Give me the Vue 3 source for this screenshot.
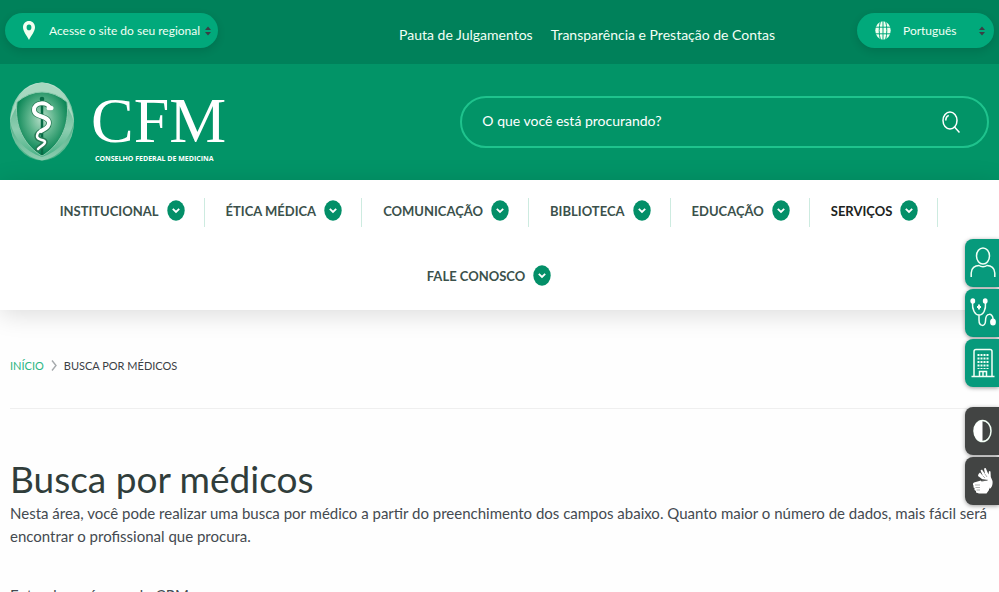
<script setup>
import { ref } from 'vue'

const regional = ref('Acesse o site do seu regional')
const language = ref('Português')
const query = ref('')

const topLinks = ['Pauta de Julgamentos', 'Transparência e Prestação de Contas']
const menu = [
  { label: 'INSTITUCIONAL' },
  { label: 'ÉTICA MÉDICA' },
  { label: 'COMUNICAÇÃO' },
  { label: 'BIBLIOTECA' },
  { label: 'EDUCAÇÃO' },
  { label: 'SERVIÇOS', active: true },
  { label: 'FALE CONOSCO' },
]
</script>

<template>
  <div class="page">
    <header>
      <div class="topbar">
        <div class="pill pill-regional">
          <svg class="pin" viewBox="0 0 12 19" aria-hidden="true">
            <path fill-rule="evenodd" d="M6 0C2.600 0 0 2.700 0 6.200C0 10.500 3.600 14 6 19C8.400 14 12 10.500 12 6.200C12 2.700 9.400 0 6 0ZM6 3.600A2.400 2.800 0 1 1 6 9.200A2.400 2.800 0 1 1 6 3.600Z" />
          </svg>
          <select v-model="regional" aria-label="Site regional">
            <option>Acesse o site do seu regional</option>
          </select>
          <svg class="arrows" viewBox="0 0 6 10" aria-hidden="true"><path d="M0 4L3 0.500L6 4ZM0 6L3 9.500L6 6Z" /></svg>
        </div>

        <nav class="top-links" aria-label="Links rápidos">
          <a v-for="link in topLinks" :key="link" href="#">{{ link }}</a>
        </nav>

        <div class="pill pill-language">
          <svg class="globe" viewBox="0 0 16 19" aria-hidden="true">
            <ellipse cx="8" cy="9.500" rx="7.700" ry="9.200" />
            <path d="M0 6.200H16M0 12.800H16M8 0V19M5.400 0.500C3.800 5 3.800 14 5.400 18.500M10.600 0.500C12.200 5 12.200 14 10.600 18.500" />
          </svg>
          <select v-model="language" aria-label="Idioma">
            <option>Português</option>
          </select>
          <svg class="arrows" viewBox="0 0 6 10" aria-hidden="true"><path d="M0 4L3 0.500L6 4ZM0 6L3 9.500L6 6Z" /></svg>
        </div>
      </div>

      <div class="brandbar">
        <a class="logo" href="#">
          <svg class="emblem" viewBox="1 0 66 80" aria-hidden="true">
            <defs>
              <linearGradient id="ring" x1="0" y1="0" x2="0" y2="1">
                <stop offset="0" stop-color="#c4e4d4" />
                <stop offset="0.350" stop-color="#6dbf9b" />
                <stop offset="0.600" stop-color="#8dcdb0" />
                <stop offset="1" stop-color="#3fae80" />
              </linearGradient>
              <radialGradient id="shield" cx="0.500" cy="0.420" r="0.560">
                <stop offset="0" stop-color="#b9dfca" />
                <stop offset="0.450" stop-color="#5eb58d" />
                <stop offset="1" stop-color="#00804f" />
              </radialGradient>
              <linearGradient id="crest" x1="0" y1="0" x2="0" y2="1">
                <stop offset="0" stop-color="#4fae86" />
                <stop offset="1" stop-color="#8fcdb1" />
              </linearGradient>
            </defs>
            <ellipse cx="33" cy="39.500" rx="32" ry="39" fill="url(#ring)" />
            <path d="M1 40C3 18 16 3 33 0.500C50 3 63 18 65 40C60 22 48 11 33 10C18 11 6 22 1 40Z" fill="#a7d8c0" />
            <path d="M1 40C2 58 15 76 33 78.500C51 76 64 58 65 40C61 56 51 69 33 75C15 69 5 56 1 40Z" fill="url(#crest)" />
            <path d="M8 20Q20 10 33 10Q46 10 58 20C61 45 50 64 33 74C16 64 5 45 8 20Z" fill="url(#shield)" stroke="#8bcbae" stroke-width="1" />
            <path d="M33 16V73" stroke="#066b45" stroke-width="2.500" />
            <circle cx="33" cy="17" r="2.300" fill="#066b45" />
            <g fill="none" stroke-linecap="round" stroke-linejoin="round">
              <path d="M41 26C38 19 25 20 25 28C25 36 40 33 40 41C40 49 28 48 28 54C28 59 36 57 36 60C36 63 31 64 29 67" stroke="#267a55" stroke-width="5.500" />
              <path d="M41 26C38 19 25 20 25 28C25 36 40 33 40 41C40 46 35 47 32 49" stroke="#fff" stroke-width="4" />
              <path d="M34 48C30 49 28 51 28 54C28 59 36 57 36 60C36 63 31 64 29 67" stroke="#fff" stroke-width="2.500" />
            </g>
            <ellipse cx="41" cy="26" rx="3.500" ry="2.500" fill="#fff" />
          </svg>
          <span class="wordmark">
            <span class="acronym">CFM</span>
            <span class="fullname">CONSELHO FEDERAL DE MEDICINA</span>
          </span>
        </a>

        <form class="search" role="search" @submit.prevent>
          <input v-model="query" type="text" placeholder="O que você está procurando?" aria-label="O que você está procurando?" />
          <button type="submit" aria-label="Buscar">
            <svg viewBox="0 0 18 22" aria-hidden="true">
              <ellipse cx="8" cy="9.500" rx="7" ry="8.500" />
              <path d="M12.500 16L17.500 21.500M3.800 9.500C3.800 7 5 5 6.800 4.500" />
            </svg>
          </button>
        </form>
      </div>
    </header>

    <nav class="menu" aria-label="Menu principal">
      <ul>
        <li v-for="item in menu" :key="item.label">
          <a href="#" :class="{ active: item.active }">
            {{ item.label }}
            <svg viewBox="0 0 18 21" aria-hidden="true">
              <ellipse cx="9" cy="10.500" rx="8.700" ry="10.200" />
              <path d="M5.800 8.800L9 12L12.200 8.800" />
            </svg>
          </a>
        </li>
      </ul>
    </nav>

    <main>
      <nav class="breadcrumb" aria-label="Trilha">
        <a href="#">INÍCIO</a>
        <svg viewBox="0 0 6 11" aria-hidden="true"><path d="M1 0.500L5 5.500L1 10.500" /></svg>
        <span>BUSCA POR MÉDICOS</span>
      </nav>
      <h1>Busca por médicos</h1>
      <p>Nesta área, você pode realizar uma busca por médico a partir do preenchimento dos campos abaixo. Quanto maior o número de dados, mais fácil será encontrar o profissional que procura.</p>
      <p class="hint">Entenda o número do CRM</p>
    </main>

    <aside class="shortcuts">
      <div class="group">
        <a href="#" aria-label="Área do médico">
          <svg viewBox="0 0 26 32" aria-hidden="true">
            <ellipse cx="13" cy="9" rx="6.500" ry="8" />
            <path d="M1.200 30V26C1.200 21 5 18.500 9 18.500C11 20 15 20 17 18.500C21 18.500 24.800 21 24.800 26V30" />
          </svg>
        </a>
        <a href="#" aria-label="Busca por médicos">
          <svg viewBox="0 0 26 32" aria-hidden="true">
            <path d="M2.500 5C2 13 5 18 9 18C13.500 18 16 13 15.500 5M9 18V23C9 30 15.500 30 15.500 24C15.500 15 23 16 23 22" />
            <path d="M9 7.500V12.500M7 10H11" stroke-width="2" />
            <g class="solid"><ellipse cx="2.800" cy="4" rx="2.400" ry="2.800" /><ellipse cx="15.200" cy="4" rx="2.400" ry="2.800" /><ellipse cx="23" cy="25" rx="2.900" ry="3.500" /></g>
          </svg>
        </a>
        <a href="#" aria-label="Área da empresa">
          <svg viewBox="0 0 26 32" aria-hidden="true">
            <path d="M4 29V4.500Q4 2.500 6 2.500H20Q22 2.500 22 4.500V29M1.500 29.500H24.500M9.500 29V24.500H16.500V29M13 24.500V29" />
            <path class="windows" d="M8.500 7V22M11.500 7V22M14.500 7V22M17.500 7V22" />
          </svg>
        </a>
      </div>
      <div class="group dark">
        <button type="button" aria-label="Alto contraste">
          <svg viewBox="0 0 26 32" aria-hidden="true">
            <ellipse cx="12.500" cy="16" rx="8.500" ry="10.500" />
            <path class="solid" d="M12.500 5.500C1 6.500 1 25.500 12.500 26.500Z" />
          </svg>
        </button>
        <button type="button" aria-label="Libras">
          <svg viewBox="0 0 26 32" aria-hidden="true">
            <g class="solid">
              <path d="M8.500 9L10 7.500L13 11L10.500 5.500L12 4.500L15 9L14 3.500L15.700 3L18.500 9.500L19 6L20.500 6.500L20.800 12L22.500 16C23 20 21.500 23 19.500 24L17 15L12 14L8 11Z" />
              <path d="M4 17.500L11 15.500L11.500 16.500L18 15.500L19 17V25L16.500 28.500H9L6 27.500V26L4.500 25V23L3.500 22.500V20.500L3 20V18.500Z" />
            </g>
            <path class="creases" d="M5 20H10M5.500 22.500H10M6.500 25H10M12 15L18 15.200M13 11L15 13M15 9L17 12" />
          </svg>
        </button>
      </div>
    </aside>
  </div>
</template>

<style>
body {
  margin: 0;
  background: #fefefe;
}
</style>

<style scoped>
.page {
  height: 100vh;
  overflow: hidden;
  font-family: Lato, "Open Sans", sans-serif;
  font-size: 15px;
  color: #444a50;
}
.page *, .page *::before, .page *::after { box-sizing: border-box; }
a { color: inherit; text-decoration: none; }

.topbar {
  display: flex;
  align-items: flex-start;
  height: 64px;
  padding: 13px 5px;
  background: #00815a;
  color: #f2fff5;
}
.pill {
  display: flex;
  align-items: center;
  height: 35px;
  border-radius: 18px;
  background: #01a97b;
  box-shadow: 0 3px 8px rgba(0, 0, 0, 0.12);
}
.pill-regional { width: 213px; padding: 0 7px 0 18px; }
.pill-language { width: 137px; padding: 0 9px 0 18px; }
.pill select {
  flex: 1;
  min-width: 0;
  height: 35px;
  padding: 0 0 1px;
  border: 0;
  appearance: none;
  background: transparent;
  color: inherit;
  font: 12px Lato, "Open Sans", sans-serif;
}
.pin { width: 12px; height: 19px; margin-right: 14px; fill: #f2fff0; }
.globe { width: 16px; height: 19px; margin-right: 12px; }
.globe ellipse { fill: #f2fff0; }
.globe path { fill: none; stroke: #01a97b; stroke-width: 1; }
.arrows { width: 6px; height: 10px; fill: #3a3f45; }

.top-links {
  display: flex;
  gap: 18px;
  margin: 12px 82px 0 auto;
  font-size: 14px;
  line-height: 20px;
}

.brandbar {
  display: flex;
  align-items: center;
  justify-content: space-between;
  height: 116px;
  padding: 0 10px;
  background: #029467;
  color: #fff;
}
.logo { display: flex; align-items: center; gap: 15px; }
.emblem { width: 66px; height: 80px; }
.wordmark { display: flex; flex-direction: column; padding-top: 10px; }
.acronym {
  font-family: "Liberation Serif", serif;
  font-size: 64px;
  line-height: 64px;
}
.fullname {
  padding-left: 4px;
  font-family: "Open Sans", sans-serif;
  font-size: 7px;
  font-weight: 700;
  line-height: 12px;
}
.search {
  display: flex;
  align-items: center;
  flex: 0 0 54%;
  height: 52px;
  padding: 0 27px 0 20px;
  border: 2px solid #1fc38d;
  border-radius: 26px;
}
.search input {
  flex: 1;
  min-width: 0;
  height: 46px;
  padding: 0 0 4px;
  border: 0;
  outline: 0;
  background: transparent;
  color: #fff;
  font: 14px Lato, "Open Sans", sans-serif;
}
.search input::placeholder { color: #fff; opacity: 1; }
.search button { padding: 0; border: 0; background: none; }
.search svg { display: block; width: 18px; height: 22px; fill: none; stroke: #fff; stroke-width: 1.5; }

.menu {
  background: #fff;
  box-shadow: 0 4px 24px rgba(0, 0, 0, 0.14);
}
.menu ul {
  display: flex;
  flex-wrap: wrap;
  justify-content: center;
  margin: 0;
  padding: 0 22px 0 0;
  list-style: none;
}
.menu li { padding: 18px 0; }
.menu li a {
  display: flex;
  align-items: center;
  gap: 8px;
  height: 29px;
  padding: 0 19px 4px 21px;
  border-right: 1px solid #cdebe0;
  color: #3b514b;
  font-size: 13px;
  font-weight: 700;
}
.menu li:last-child a { border-color: transparent; }
.menu li a.active { color: #1c2321; }
.menu svg { width: 18px; height: 21px; }
.menu ellipse { fill: #038f68; }
.menu path { fill: none; stroke: #fff; stroke-width: 1.8; }

main { padding: 0 6px 0 10px; }
.breadcrumb {
  display: flex;
  align-items: center;
  gap: 7px;
  height: 99px;
  padding-top: 12px;
  border-bottom: 1px solid #efefef;
  color: #3b4045;
  font-size: 11px;
}
.breadcrumb a { color: #2bb683; }
.breadcrumb svg { width: 6px; height: 11px; fill: none; stroke: #a5a9ac; stroke-width: 1.4; }
h1 {
  margin: 47px 0 0;
  color: #303d3b;
  font-size: 37px;
  font-weight: 400;
  line-height: 46px;
}
p { margin: 0; line-height: 23px; }
.hint { margin-top: 36px; }

.shortcuts {
  position: fixed;
  top: 239px;
  right: 0;
  display: flex;
  flex-direction: column;
  gap: 20px;
}
.group { display: flex; flex-direction: column; gap: 2px; }
.group a, .group button {
  display: flex;
  align-items: center;
  width: 34px;
  height: 48px;
  padding: 0 0 0 5px;
  border: 0;
  border-radius: 8px 0 0 8px;
  background: #079a7c;
  box-shadow: 0 1px 4px rgba(0, 0, 0, 0.4);
}
.group.dark button { background: #424443; }
.group svg { flex: none; width: 26px; height: 32px; fill: none; stroke: #f2fff5; stroke-width: 1.5; }
.group .solid { fill: #fff; stroke: none; }
.group .windows { stroke-width: 2; stroke-dasharray: 2 1.5; }
.group .creases { stroke: #8b8d8c; stroke-width: 0.7; }
</style>
